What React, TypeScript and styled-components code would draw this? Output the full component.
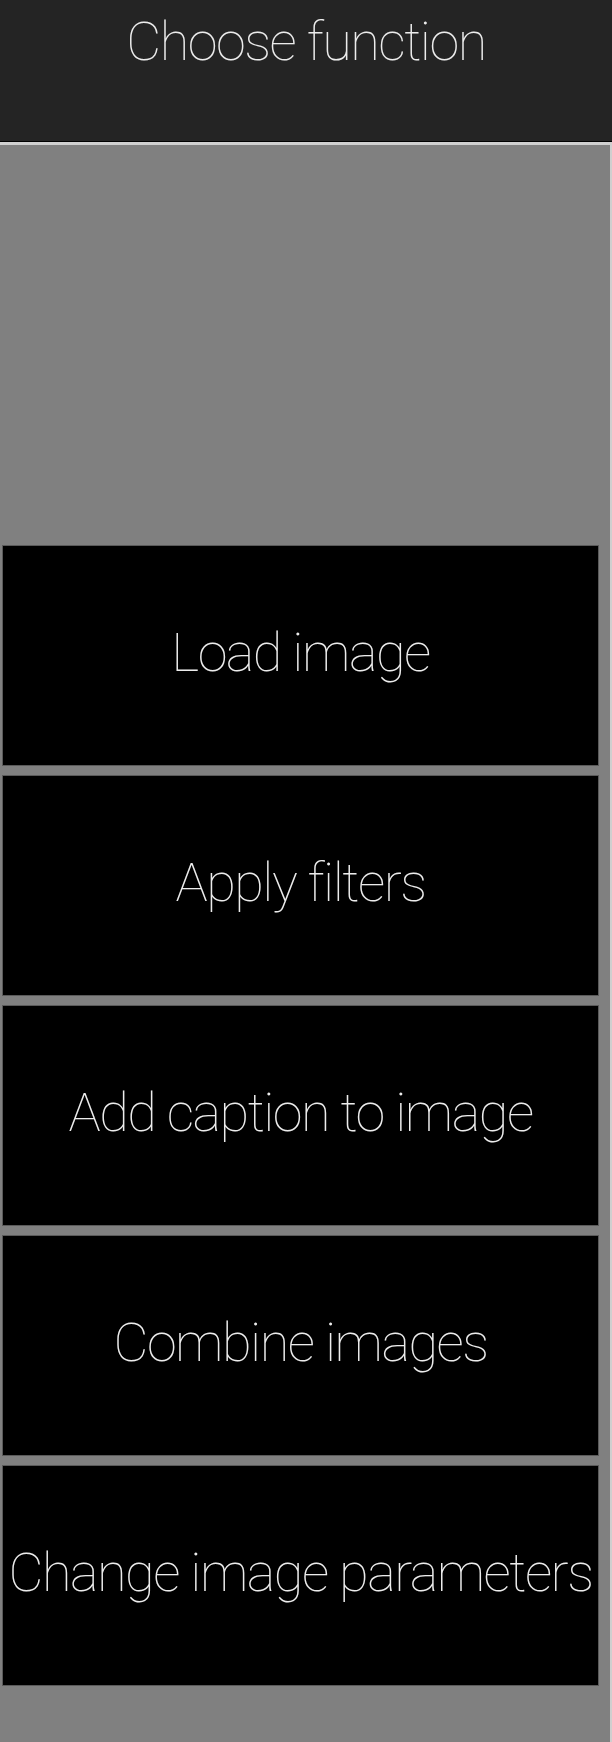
import React from "react";
import styled, { createGlobalStyle } from "styled-components";

const GlobalStyle = createGlobalStyle`
  html, body {
    margin: 0;
    padding: 0;
    background: #808080;
  }
  body {
    font-family: Roboto, "Liberation Sans", sans-serif;
  }
`;

const Screen = styled.div`
  width: 612px;
  min-height: 1742px;
  display: flex;
  flex-direction: column;
`;

const Header = styled.header`
  height: 142px;
  background: #242424;
  border-bottom: 1px solid #000;
  display: flex;
  justify-content: center;
  align-items: flex-start;
  padding-top: 4px;
  box-sizing: border-box;
`;

const Title = styled.h1`
  margin: 0;
  font-size: 54px;
  font-weight: 100;
  letter-spacing: -1.5px;
  color: #ececec;
  line-height: 76px;
`;

const Panel = styled.main`
  flex: 1;
  background: #808080;
  border-top: 3px solid #cfcfcf;
  border-right: 2px solid #cfcfcf;
  padding: 400px 9px 0 2px;
  display: flex;
  flex-direction: column;
  gap: 9px;
`;

const FunctionButton = styled.button`
  height: 221px;
  width: 597px;
  margin: 0;
  padding: 0 0 6px;
  background: #000;
  border: 1px solid #5a5a5a;
  color: #ececec;
  font-family: Roboto, "Liberation Sans", sans-serif;
  font-size: 54px;
  font-weight: 100;
  letter-spacing: -1.5px;
  white-space: nowrap;
  cursor: pointer;
`;

const functions = [
  "Load image",
  "Apply filters",
  "Add caption to image",
  "Combine images",
  "Change image parameters",
];

export default function App() {
  return (
    <>
      <GlobalStyle />
      <Screen>
        <Header>
          <Title>Choose function</Title>
        </Header>
        <Panel>
          {functions.map((name) => (
            <FunctionButton key={name}>{name}</FunctionButton>
          ))}
        </Panel>
      </Screen>
    </>
  );
}
